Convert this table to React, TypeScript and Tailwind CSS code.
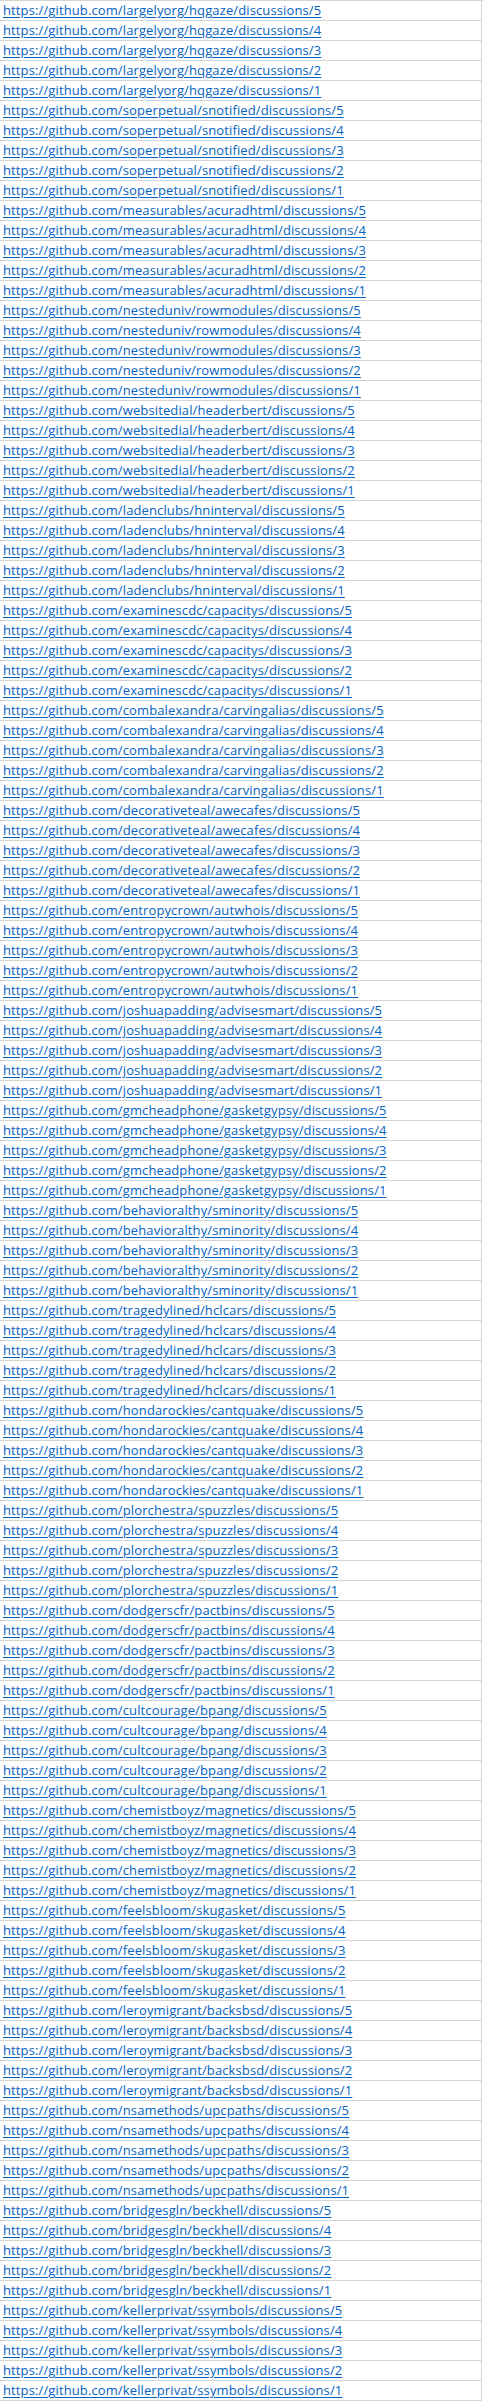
import React from "react";

const repos = [
  "largelyorg/hqgaze",
  "soperpetual/snotified",
  "measurables/acuradhtml",
  "nesteduniv/rowmodules",
  "websitedial/headerbert",
  "ladenclubs/hninterval",
  "examinescdc/capacitys",
  "combalexandra/carvingalias",
  "decorativeteal/awecafes",
  "entropycrown/autwhois",
  "joshuapadding/advisesmart",
  "gmcheadphone/gasketgypsy",
  "behavioralthy/sminority",
  "tragedylined/hclcars",
  "hondarockies/cantquake",
  "plorchestra/spuzzles",
  "dodgerscfr/pactbins",
  "cultcourage/bpang",
  "chemistboyz/magnetics",
  "feelsbloom/skugasket",
  "leroymigrant/backsbsd",
  "nsamethods/upcpaths",
  "bridgesgln/beckhell",
  "kellerprivat/ssymbols",
];

export default function App() {
  const links: string[] = [];
  repos.forEach((r) => {
    for (let i = 5; i >= 1; i--) links.push(`https://github.com/${r}/discussions/${i}`);
  });

  return (
    <div className="bg-white w-[483px] border-t border-[#d4d4d4]" style={{ fontFamily: '"Open Sans", "Noto Sans", sans-serif' }}>
      {links.map((url, i) => (
        <div key={i} className="h-5 w-[482px] border-b border-r border-[#d4d4d4] flex items-end pl-[3px] overflow-hidden">
          <a href={url} className="text-[13px] tracking-[0.12px] leading-[19px] text-[#0563c1] underline underline-offset-2 whitespace-nowrap">
            {url}
          </a>
        </div>
      ))}
    </div>
  );
}
